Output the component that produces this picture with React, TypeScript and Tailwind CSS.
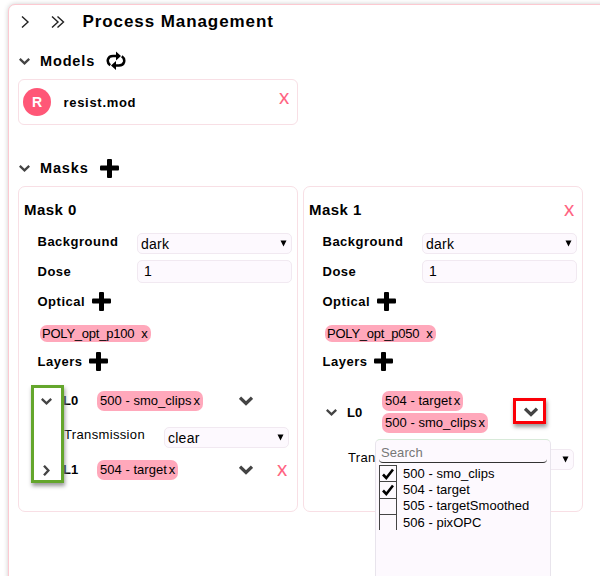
import React from "react";

function Chevron({ big = false, right = false }: { big?: boolean; right?: boolean }) {
  return (
    <svg
      viewBox="0 0 14 14"
      className={`${big ? "size-[14px]" : "size-[11px]"} ${right ? "-rotate-90" : ""} shrink-0`}
      fill="none"
      stroke="#444"
      strokeWidth={big ? 3.3 : 3}
    >
      <path d="M1 3.8 L7 9.4 L13 3.8" />
    </svg>
  );
}

function Plus() {
  return (
    <svg viewBox="0 0 19 19" className="size-[19px] shrink-0">
      <rect x="0" y="6.500" width="19" height="5" rx="1" />
      <rect x="7" y="0" width="5" height="19" rx="1" />
    </svg>
  );
}

function Loop() {
  return (
    <svg viewBox="0 0 20 20" className="size-5 shrink-0" fill="none" stroke="#000" strokeWidth="2.5">
      <path d="M4.2 14.200 C0 11 1.500 5 7 5 H12" />
      <path d="M15.800 5.300 C20 8.500 18.500 14.500 13 14.500 H8" />
      <path d="M10 0.500 L15 5 L10 9.500 Z M10 10 L5 14.500 L10 19 Z" fill="#000" stroke="none" />
    </svg>
  );
}

function Label({ children }: { children: React.ReactNode }) {
  return <span className="pt-px text-[13px] leading-4 font-bold tracking-[0.5px]">{children}</span>;
}

function Chip({ text, optical = false }: { text: string; optical?: boolean }) {
  return (
    <span
      className={`flex w-fit items-center rounded-[7px] bg-[#ffa8bb] text-[13px] ${
        optical ? "h-[17px] gap-[7px] pr-[3px] pl-[2px] tracking-[-0.22px]" : "h-5 gap-[2px] px-[3px] tracking-[0.03px]"
      }`}
    >
      <span>{text}</span>
      <span>x</span>
    </span>
  );
}

function Select({ value, small = false }: { value: string; small?: boolean }) {
  return (
    <div
      className={`${
        small ? "w-[125px]" : "w-[155px]"
      } flex h-[21px] items-center justify-between rounded-[5px] border border-[#f1e9f1] bg-[#fdf9fe] pr-[4px] pl-[3px] text-[14px] tracking-[0.25px]`}
    >
      <span className="pt-px">{value}</span>
      <svg viewBox="0 0 7 7" className="size-[7px]">
        <path d="M0.500 0.500 H6.500 L3.500 6.500 Z" />
      </svg>
    </div>
  );
}

function Remove() {
  return <span className="font-['Lato'] text-[15px] leading-4 text-[#ff5c7c] [-webkit-text-stroke:0.2px]">X</span>;
}

function MaskCard({ title, optical, removable = false, children }: {
  title: string;
  optical: string;
  removable?: boolean;
  children: React.ReactNode;
}) {
  return (
    <section className="h-[326px] w-[280px] rounded-[7px] border border-[#f8dfe5]">
      <div className="mt-[13px] flex h-5 items-center justify-between pr-[8px] pl-[5px]">
        <span className="text-[15px] font-bold tracking-[0.45px]">{title}</span>
        {removable && <Remove />}
      </div>
      <div className="mt-[13px] flex h-[26px] justify-between pr-[5px] pl-[18.500px]">
        <Label>Background</Label>
        <Select value="dark" />
      </div>
      <div className="flex h-6 items-center justify-between pr-[5px] pl-[18.500px]">
        <Label>Dose</Label>
        <div className="flex h-[23px] w-[155px] items-center rounded-[5px] border border-[#f1e9f1] bg-[#fdf9fe] pl-[6px] text-[14px]">1</div>
      </div>
      <div className="mt-[8px] flex h-5 items-center gap-[7px] pl-[18.500px]">
        <Label>Optical</Label>
        <Plus />
      </div>
      <div className="mt-[14px] pl-[21px]"><Chip text={optical} optical /></div>
      <div className="mt-[9px] flex h-5 items-center gap-[7px] pl-[18.500px]">
        <Label>Layers</Label>
        <Plus />
      </div>
      {children}
    </section>
  );
}

const options: [string, boolean][] = [
  ["500 - smo_clips", true],
  ["504 - target", true],
  ["505 - targetSmoothed", false],
  ["506 - pixOPC", false],
];

function LayerMenu() {
  return (
    <div className="absolute top-[439px] left-[375px] h-[145px] w-[176px] rounded-[5px] border border-[#e8e4ec] border-t-[#d8ead9] bg-[#fdf9fe] pt-[4px] pl-[3px]">
      <div className="h-[19px] w-[168px] rounded-[4px] border-b border-[#333] pl-[2px] text-[13px] leading-[17px] tracking-[0.1px] text-[#777]">
        Search
      </div>
      <div className="mt-[2px]">
        {options.map(([name, checked]) => (
          <div key={name} className="flex h-[16.300px] items-center">
            <span className="flex h-full w-[18px] items-center justify-center border-x border-t border-[#444]">
              {checked && (
                <svg viewBox="0 0 12 12" className="size-3" fill="none" stroke="#000" strokeWidth="2.600">
                  <path d="M1 6.500 L4.300 10 L11 1.500" />
                </svg>
              )}
            </span>
            <span className="ml-[6px] pt-px text-[13px] leading-4 tracking-[0.03px]">{name}</span>
          </div>
        ))}
      </div>
    </div>
  );
}

export default function App() {
  return (
    <div className="relative h-[576px] w-[600px] overflow-hidden bg-white pt-[4px] pl-[8px] font-['Liberation_Sans',sans-serif] text-black">
      <main className="h-[590px] w-[620px] rounded-[7px] border border-[#fcc9d1] bg-white shadow-[0_0_5px_#ccc]">
        <header className="flex h-[33px] items-center pl-[12px]">
          <svg viewBox="0 0 46 12" className="h-3 w-[46px]" fill="none" stroke="#222" strokeWidth="1.400">
            <path d="M1 0.500 L7 6 L1 11.500 M31 0.500 L37 6 L31 11.500 M36.500 0.500 L42.500 6 L36.500 11.500" />
          </svg>
          <h1 className="ml-[15.500px] text-[17px] font-bold tracking-[0.92px]">Process Management</h1>
        </header>
        <div className="mt-[13px] flex h-5 items-center pl-[10px]">
          <Chevron />
          <h2 className="mr-[11px] ml-[10px] pt-px text-[14.500px] font-bold tracking-[0.85px]">Models</h2>
          <Loop />
        </div>
        <div className="mt-[8px] ml-[9px] flex h-[46px] w-[280px] items-center rounded-[6px] border border-[#f8dfe5] pr-[8px] pl-[4px]">
          <span className="flex size-7 items-center justify-center rounded-full bg-[#ff5777] text-[14px] font-bold text-white">R</span>
          <span className="ml-[12.500px] flex-1 pt-px text-[13px] font-bold tracking-[0.700px]">resist.mod</span>
          <span className="mb-[9px] flex"><Remove /></span>
        </div>
        <div className="mt-[33px] flex h-5 items-center pl-[10px]">
          <Chevron />
          <h2 className="mr-[11px] ml-[10px] pt-px text-[14.500px] font-bold tracking-[0.85px]">Masks</h2>
          <Plus />
        </div>
        <div className="mt-[8px] ml-[9px] flex gap-[5px]">
          <MaskCard title="Mask 0" optical="POLY_opt_p100">
            <div className="mt-[20px] flex h-5 items-center pl-[22px]">
              <Chevron />
              <span className="ml-[11px] w-[34px] text-[13px] font-bold">L0</span>
              <Chip text="500 - smo_clips" />
              <span className="ml-auto pr-[44px]"><Chevron big /></span>
            </div>
            <div className="mt-[16px] flex h-[21px] justify-between pr-[8px] pl-[45px]">
              <span className="text-[13px] leading-4 tracking-[0.35px]">Transmission</span>
              <Select value="clear" small />
            </div>
            <div className="mt-[12px] flex h-5 items-center pr-[10px] pl-[22px]">
              <Chevron right />
              <span className="ml-[11px] w-[34px] text-[13px] font-bold">L1</span>
              <Chip text="504 - target" />
              <span className="mr-[24px] ml-auto"><Chevron big /></span>
              <Remove />
            </div>
          </MaskCard>
          <MaskCard title="Mask 1" optical="POLY_opt_p050" removable>
            <div className="mt-[20px] flex h-[42px] items-center pl-[22px]">
              <Chevron />
              <span className="ml-[10px] w-[35px] pt-px text-[13px] font-bold">L0</span>
              <span className="flex flex-col gap-[2px]">
                <Chip text="504 - target" />
                <Chip text="500 - smo_clips" />
              </span>
              <span className="ml-auto pr-[44px]"><Chevron big /></span>
            </div>
            <div className="mt-[16px] flex h-[21px] justify-between pr-[8px] pl-[44px]">
              <span className="pt-px text-[13px] leading-4 tracking-[0.35px]">Transmission</span>
              <Select value="clear" small />
            </div>
          </MaskCard>
        </div>
      </main>
      <LayerMenu />
      <div className="absolute top-[385px] left-[31px] h-[98px] w-[33px] border-[3px] border-[#64a62c] shadow-[1px_3px_4px_#999]" />
      <div className="absolute top-[398px] left-[513px] h-[26px] w-[33px] border-[3px] border-[#fb0007] shadow-[1px_3px_4px_#999]" />
    </div>
  );
}
